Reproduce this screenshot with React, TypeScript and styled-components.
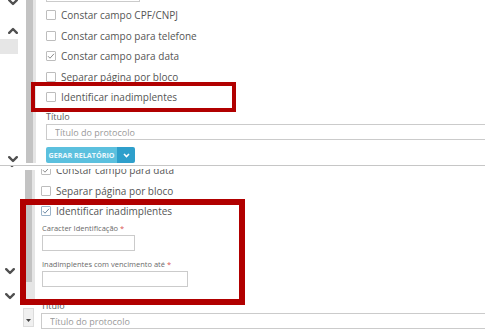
import React from "react";
import styled, { createGlobalStyle } from "styled-components";

const Global = createGlobalStyle`
  html, body { margin: 0; padding: 0; background: #fff; }
  body { font-family: "Open Sans", "Liberation Sans", sans-serif; }
  * { box-sizing: border-box; }
`;

const Page = styled.div`
  width: 485px;
  height: 330px;
  overflow: hidden;
  display: flex;
  flex-direction: column;
  background: #fff;
`;

const Panel = styled.section<{ $h: number }>`
  position: relative;
  height: ${(p) => p.$h}px;
  flex-shrink: 0;
  display: flex;
  overflow: hidden;
`;

const Divider = styled.div`
  height: 1px;
  flex-shrink: 0;
  background: #c6c6c6;
`;

const SideNav = styled.nav<{ $w: number }>`
  width: ${(p) => p.$w}px;
  flex-shrink: 0;
  display: flex;
  flex-direction: column;
  align-items: flex-start;
`;

const NavIcon = styled.svg<{ $mt: number; $ml: number }>`
  display: block;
  flex-shrink: 0;
  margin-top: ${(p) => p.$mt}px;
  margin-left: ${(p) => p.$ml}px;
`;

const NavBlock = styled.div`
  width: 18px;
  height: 15px;
  margin-top: 5px;
  background: #e6e6e6;
`;

const ScrollCol = styled.div<{ $w: number; $pt: number }>`
  width: ${(p) => p.$w}px;
  flex-shrink: 0;
  display: flex;
  flex-direction: column;
  padding-top: ${(p) => p.$pt}px;
`;

const Track = styled.div<{ $h: number }>`
  width: 10px;
  height: ${(p) => p.$h}px;
  background: #e5e5e5;
  display: flex;
  flex-direction: column;
`;

const Thumb = styled.div<{ $h: number }>`
  width: 7px;
  height: ${(p) => p.$h}px;
  background: #c3c3c3;
`;

const ScrollButton = styled.div`
  width: 11px;
  height: 19px;
  margin-top: 3px;
  margin-left: -2px;
  background: #f0f0f0;
  border: 1px solid #dcdcdc;
  display: flex;
  align-items: center;
  justify-content: center;
  padding-top: 6px;
`;

const Content = styled.div<{ $pl: number }>`
  flex: 1;
  min-width: 0;
  display: flex;
  flex-direction: column;
  align-items: flex-start;
  padding-left: ${(p) => p.$pl}px;
`;

const ClipArea = styled.div`
  align-self: stretch;
  margin-top: 3px;
  flex: 1;
  min-height: 0;
  overflow: hidden;
  display: flex;
  flex-direction: column;
  align-items: flex-start;
`;

const CheckList = styled.div<{ $mt: number }>`
  display: flex;
  flex-direction: column;
  margin-top: ${(p) => p.$mt}px;
`;

const CheckRow = styled.label`
  height: 20.5px;
  display: flex;
  align-items: center;
  gap: 5px;
  font-size: 10px;
  color: #555;
  white-space: nowrap;
`;

const Box = styled.span<{ $focus?: boolean }>`
  width: 10px;
  height: 10px;
  flex-shrink: 0;
  border: 1px solid ${(p) => (p.$focus ? "#9bb3c9" : "#bdbdbd")};
  border-radius: 1px;
  background: #fff;
  display: flex;
  align-items: center;
  justify-content: center;
`;

const FieldLabel = styled.div<{ $mt: number }>`
  font-size: 9px;
  line-height: 12px;
  color: #5a5a5a;
  margin-top: ${(p) => p.$mt}px;
  white-space: nowrap;
`;

const SmallLabel = styled.div<{ $mt: number }>`
  font-size: 7.5px;
  line-height: 10px;
  color: #6a6a6a;
  margin-top: ${(p) => p.$mt}px;
  margin-left: 1px;
  white-space: nowrap;
`;

const Req = styled.span`
  color: #d9534f;
`;

const TextInput = styled.input<{ $w: string; $mt: number; $ml?: number }>`
  display: block;
  width: ${(p) => p.$w};
  height: 16px;
  margin: ${(p) => p.$mt}px 0 0 ${(p) => p.$ml ?? 0}px;
  padding: 0 8px;
  border: 1px solid #cbcbcb;
  background: #fff;
  font-family: "Open Sans", "Liberation Sans", sans-serif;
  font-size: 9px;
  color: #555;
  outline: none;
  &::placeholder { color: #999; }
`;

const ButtonGroup = styled.div`
  display: flex;
  height: 16px;
  margin-top: 7px;
  border-radius: 2px;
  overflow: hidden;
`;

const MainButton = styled.button`
  width: 71px;
  height: 16px;
  padding: 0;
  border: none;
  background: #5bc0de;
  color: #eaf7fc;
  font-family: "Open Sans", "Liberation Sans", sans-serif;
  font-weight: 700;
  font-size: 7.2px;
  white-space: nowrap;
`;

const CaretButton = styled.button`
  width: 18px;
  height: 16px;
  padding: 0;
  border: none;
  background: #2e9fcb;
  display: flex;
  align-items: center;
  justify-content: center;
`;

const Highlight = styled.div<{ $l: number; $t: number; $w: number; $h: number; $b: number }>`
  position: absolute;
  left: ${(p) => p.$l}px;
  top: ${(p) => p.$t}px;
  width: ${(p) => p.$w}px;
  height: ${(p) => p.$h}px;
  border: ${(p) => p.$b}px solid #b10000;
  pointer-events: none;
`;

const Chevron = ({ up, mt, ml }: { up?: boolean; mt: number; ml: number }) => (
  <NavIcon $mt={mt} $ml={ml} width="10" height="7" viewBox="0 0 10 7">
    <polyline
      points={up ? "1.2,5.8 5,2 8.8,5.8" : "1.2,1.2 5,5 8.8,1.2"}
      fill="none"
      stroke="#505050"
      strokeWidth="2.4"
      strokeLinecap="round"
      strokeLinejoin="round"
    />
  </NavIcon>
);

const Check = ({ color }: { color: string }) => (
  <svg width="8" height="8" viewBox="0 0 8 8">
    <polyline points="1,4.2 3,6.2 7,1.8" fill="none" stroke={color} strokeWidth="1" />
  </svg>
);

const CheckItem = ({ label, checked, focus }: { label: string; checked?: boolean; focus?: boolean }) => (
  <CheckRow>
    <Box $focus={focus}>{checked && <Check color={focus ? "#6d8aa5" : "#8c8c8c"} />}</Box>
    <span>{label}</span>
  </CheckRow>
);

export default function App() {
  return (
    <Page>
      <Global />
      <Panel $h={165}>
        <SideNav $w={26}>
          <Chevron mt={-1} ml={8} />
          <Chevron up mt={21} ml={8} />
          <NavBlock />
          <Chevron mt={102} ml={8} />
        </SideNav>
        <ScrollCol $w={11} $pt={0}>
          <Track $h={163}>
            <Thumb $h={163} />
          </Track>
        </ScrollCol>
        <Content $pl={9}>
          <TextInput $w="94px" $mt={-14} readOnly />
          <CheckList $mt={3}>
            <CheckItem label="Constar campo CPF/CNPJ" />
            <CheckItem label="Constar campo para telefone" />
            <CheckItem label="Constar campo para data" checked />
            <CheckItem label="Separar página por bloco" />
            <CheckItem label="Identificar inadimplentes" />
          </CheckList>
          <FieldLabel $mt={3.5}>Título</FieldLabel>
          <TextInput $w="calc(100% + 20px)" $mt={1} placeholder="Título do protocolo" readOnly />
          <ButtonGroup>
            <MainButton>GERAR RELATÓRIO</MainButton>
            <CaretButton>
              <svg width="7" height="5" viewBox="0 0 7 5">
                <polyline points="1,1 3.5,3.5 6,1" fill="none" stroke="#fff" strokeWidth="1.6" />
              </svg>
            </CaretButton>
          </ButtonGroup>
        </Content>
        <Highlight $l={31} $t={82} $w={205} $h={30} $b={4} />
      </Panel>
      <Divider />
      <Panel $h={164}>
        <SideNav $w={25}>
          <Chevron mt={-5} ml={7} />
          <Chevron mt={100} ml={5} />
          <Chevron mt={18} ml={5} />
        </SideNav>
        <ScrollCol $w={10} $pt={4}>
          <Track $h={135}>
            <Thumb $h={112} />
          </Track>
          <ScrollButton>
            <svg width="5" height="3" viewBox="0 0 5 3">
              <polygon points="0,0 5,0 2.5,3" fill="#444" />
            </svg>
          </ScrollButton>
        </ScrollCol>
        <Content $pl={6}>
          <ClipArea>
            <CheckList $mt={-9}>
              <CheckItem label="Constar campo para data" checked />
              <CheckItem label="Separar página por bloco" />
              <CheckItem label="Identificar inadimplentes" checked focus />
            </CheckList>
            <SmallLabel $mt={1.5}>
              Caracter Identificação <Req>*</Req>
            </SmallLabel>
            <TextInput $w="93px" $mt={2} $ml={1} readOnly />
            <SmallLabel $mt={8}>
              Inadimplentes com vencimento até <Req>*</Req>
            </SmallLabel>
            <TextInput $w="146px" $mt={2} $ml={1} readOnly />
            <FieldLabel $mt={13}>Título</FieldLabel>
            <TextInput $w="calc(100% + 20px)" $mt={1} placeholder="Título do protocolo" readOnly />
          </ClipArea>
        </Content>
        <Highlight $l={20} $t={33} $w={225} $h={106} $b={6} />
      </Panel>
    </Page>
  );
}
